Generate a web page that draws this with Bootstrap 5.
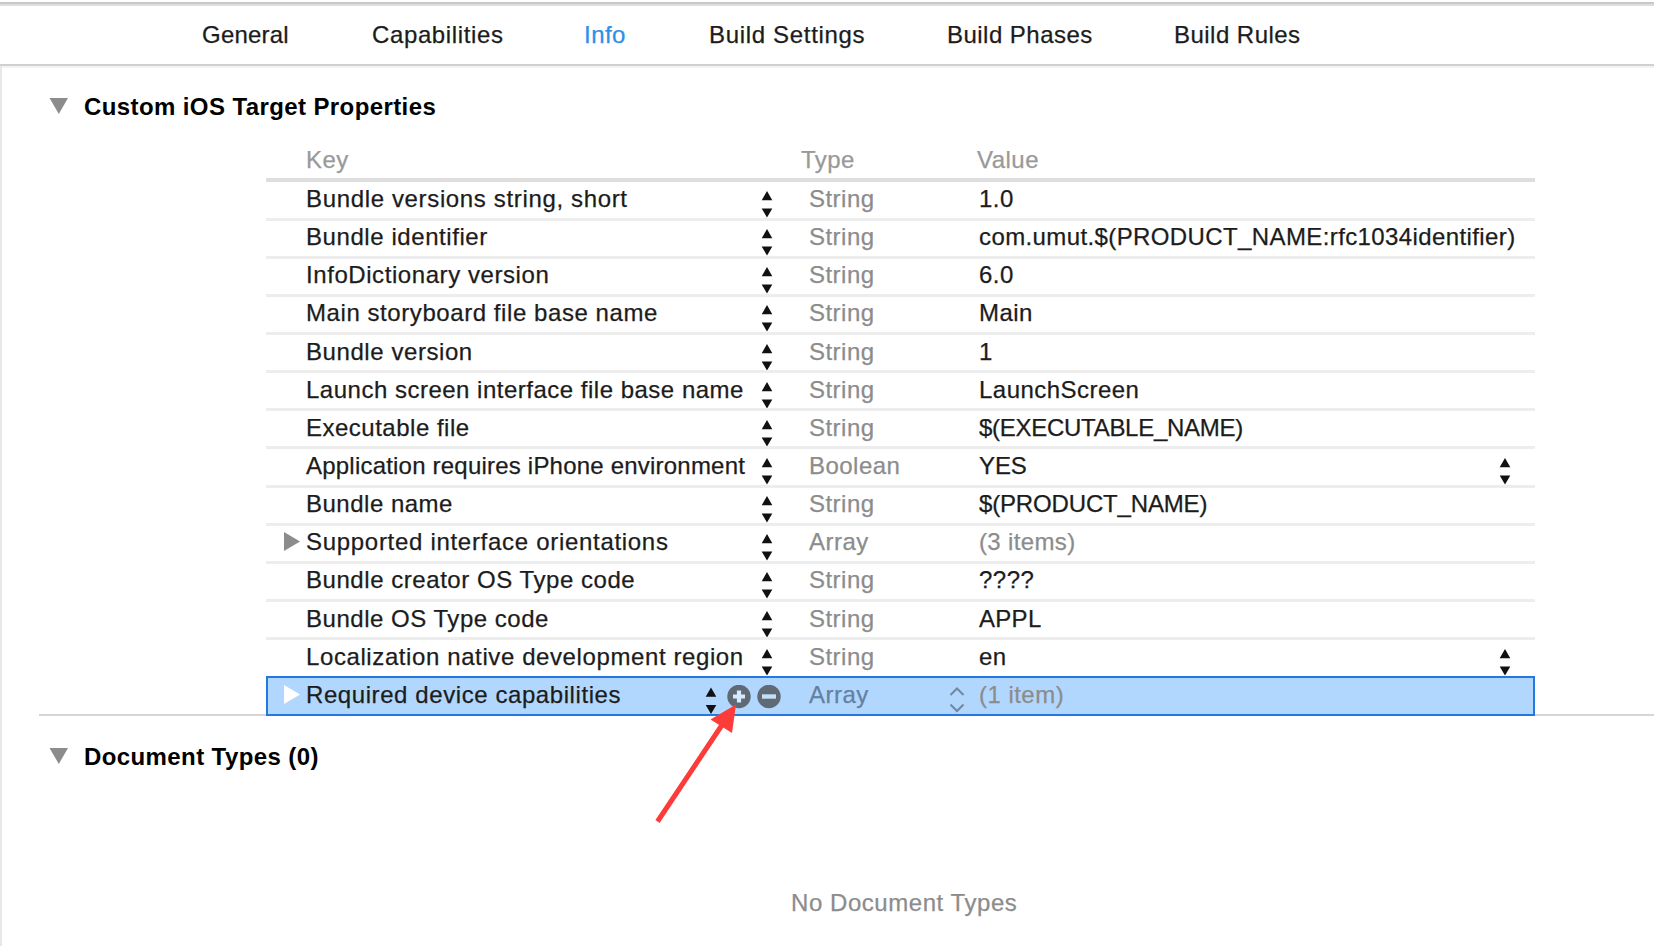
<!DOCTYPE html>
<html lang="en">
<head>
<meta charset="utf-8">
<title>Target Info</title>
<link href="https://cdn.jsdelivr.net/npm/bootstrap@5.3.0/dist/css/bootstrap.min.css" rel="stylesheet">
<style>
body{font-family:"Liberation Sans",Arial,sans-serif;font-size:24px;letter-spacing:.47px;color:#1c1c1c;background:#fff;width:1654px;height:946px;overflow:hidden;-webkit-text-stroke:.25px}
.tabbar{margin-top:2px;border-top:2px solid #c8c8c8;border-bottom:2px solid #d0d0d0;box-shadow:inset 0 2px #dedede,0 2px #f3f3f3;height:64px}
.tabbar .nav-link{padding:0;color:#1c1c1c;line-height:27px;white-space:nowrap}
.tabbar .nav-link.active{color:#2b8fe8}
.tabs{padding:17px 0 0 202px}
.t-gen{width:170px;letter-spacing:.22px}
.t-cap{width:212px;letter-spacing:.62px}
.t-info{width:125px}
.t-set{width:238px;letter-spacing:.68px}
.t-pha{width:227px}
.pane{border-left:2px solid #e8e8e8;height:880px}
.sect{font-weight:700;font-size:24px;color:#000;letter-spacing:.4px;line-height:28px;gap:14px;padding:27px 0 0 48px;-webkit-text-stroke:0}
.sect svg{display:block;margin:-2px 1px 0 -1px}
.plist{margin:22px 0 0 264px;width:1269px;position:relative}
.prow{display:grid;grid-template-columns:40px 445px 58px 170px 1fr;height:38.15px;line-height:35.5px;position:relative;white-space:nowrap}
.prow + .prow::before{content:"";position:absolute;left:0;right:0;top:-1.5px;height:3px;background:#ededed}
.prow .ty,.prow .dim{color:#8c8c8c}
.phead{color:#999;height:38px;line-height:34px}
.phead::after{content:"";position:absolute;left:0;right:0;bottom:-1px;height:4px;background:#dedede}
.st{width:12px;height:27px;margin-top:10px;display:block}
.key-st{margin-left:9.5px}
.val-st{position:absolute;left:1233px;top:0}
.disc{margin:8px 0 0 18px;display:block}
.picked{height:40px;margin-top:-.5px;background:#b2d7fe;border:2px solid #2579de;line-height:34px;grid-template-columns:38px 445px 58px 170px 1fr}
.picked .disc{margin:7px 0 0 16px}
.picked .ty{color:#64819f}
.tools{position:absolute;left:437px;top:7px}
.typ-st{position:absolute;left:681px;top:9px}
.rule{height:2px;background:#d6d6d6;margin:-2px 0 0 37px}
.none{color:#8c8c8c;text-align:center;line-height:28px;letter-spacing:.55px;width:226px;margin:118px 0 0 789px;white-space:nowrap}
.pointer{position:absolute;left:650px;top:700px}
</style>
</head>
<body>
<svg class="d-none"><defs>
<g id="ud"><path d="M6 0 11.300 9.300H.7zM6 26.500 11.300 17.500H.7z" fill="#111"/></g>
</defs></svg>
<header class="tabbar"><nav class="nav tabs">
<a class="nav-link t-gen">General</a><a class="nav-link t-cap">Capabilities</a><a class="nav-link active t-info">Info</a><a class="nav-link t-set">Build Settings</a><a class="nav-link t-pha">Build Phases</a><a class="nav-link">Build Rules</a>
</nav></header>
<main class="pane">
<h2 class="sect d-flex align-items-center m-0"><svg width="20" height="18"><path d="M.5 1H19L9.8 17z" fill="#8c8c8c"/></svg>Custom iOS Target Properties</h2>
<div class="plist">
<div class="prow phead"><span></span><span>Key</span><span></span><span style="margin-left:-8px">Type</span><span style="margin-left:-2px">Value</span></div>
<div id="rows"></div>
<div class="prow picked"><svg class="disc" width="17" height="20"><path d="M0 0V19L16 9.500z" fill="#fff"/></svg><span style="letter-spacing:.58px">Required device capabilities</span><span></span><span class="ty">Array</span><span class="dim">(1 item)</span>
<svg class="tools" width="80" height="30"><use href="#ud" y="2.5"/><g transform="translate(34 11.5)"><circle r="11.7" fill="#5f6a75"/><path d="M0-6V6M-6 0H6" stroke="#d5e9ff" stroke-width="4.2"/></g><g transform="translate(64 11.5)"><circle r="11.7" fill="#5f6a75"/><path d="M-7 0H7" stroke="#c5dffb" stroke-width="4.4"/></g></svg>
<svg class="typ-st" width="16" height="26"><path d="M1.5 8 8 1.500 14.500 8M1.500 17.500 8 24 14.500 17.500" fill="none" stroke="#71879e" stroke-width="2"/></svg></div>
</div>
<div class="rule"></div>
<h2 class="sect d-flex align-items-center m-0"><svg width="20" height="18"><path d="M.5 1H19L9.8 17z" fill="#8c8c8c"/></svg>Document Types (0)</h2>
<div class="none">No Document Types</div>
</main>
<svg class="pointer" width="92" height="128"><path d="M7.500 121.500 74 22" stroke="#fd3b38" stroke-width="5"/><path d="M86 4.500 60.500 19.500 82 33z" fill="#fd3b38"/></svg>
<script>
// key, type, value, key tracking, value tracking, value stepper, disclosure
const rows=[["Bundle versions string, short","String","1.0",.65,.47],["Bundle identifier","String","com.umut.$(PRODUCT_NAME:rfc1034identifier)",.57,.39],["InfoDictionary version","String","6.0",.57,.47],["Main storyboard file base name","String","Main",.57,.47],["Bundle version","String","1",.57,.47],["Launch screen interface file base name","String","LaunchScreen",.5,.47],["Executable file","String","$(EXECUTABLE_NAME)",.5,-.28],["Application requires iPhone environment","Boolean","YES",.21,-.1,1],["Bundle name","String","$(PRODUCT_NAME)",.5,-.16],["Supported interface orientations","Array","(3 items)",.7,.35,0,1],["Bundle creator OS Type code","String","????",.55,.47],["Bundle OS Type code","String","APPL",.52,.3],["Localization native development region","String","en",.6,.47,1]];
const stepper=c=>`<svg class="st ${c}"><use href="#ud"/></svg>`;
document.getElementById("rows").innerHTML=rows.map(([k,t,v,a,b,s,d])=>`<div class="prow">${d?'<svg class="disc" width="17" height="20"><path d="M0 0V19L16 9.500z" fill="#8c8c8c"/></svg>':'<span></span>'}<span style="letter-spacing:${a}px">${k}</span>${stepper("key-st")}<span class="ty">${t}</span><span class="${d?'dim':''}" style="letter-spacing:${b}px">${v}</span>${s?stepper("val-st"):''}</div>`).join("");
</script>
<script src="https://cdn.jsdelivr.net/npm/bootstrap@5.3.0/dist/js/bootstrap.bundle.min.js"></script>
</body>
</html>
